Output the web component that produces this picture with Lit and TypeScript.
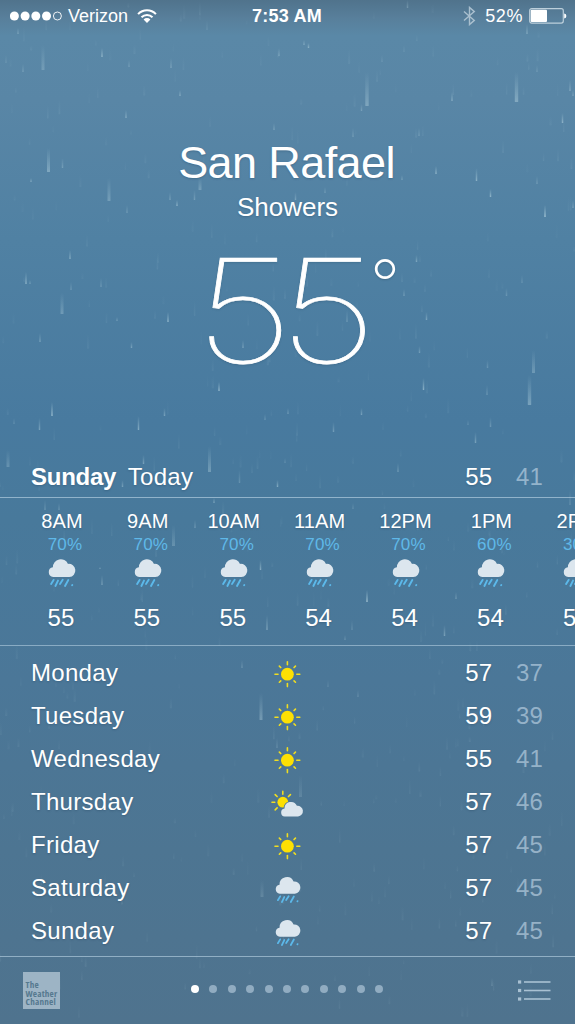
import { LitElement, html, svg, css } from "lit";
import { customElement, property } from "lit/decorators.js";

type Drop = [x: number, top: number, bottom: number, alpha: number, width?: number];

const DROPS: Drop[] = [
  [43, 45, 70, 0.25, 3], [102, 48, 57, 0.5], [18, 28, 34, 0.3], [6, 55, 63, 0.15], [23, 64, 72, 0.25],
  [129, 60, 67, 0.25], [171, 58, 68, 0.3], [180, 90, 96, 0.4], [126, 110, 118, 0.4], [279, 48, 56, 0.3],
  [274, 123, 130, 0.3], [207, 20, 30, 0.12], [304, 40, 45, 0.35], [308.5, 43, 48, 0.5], [367, 72, 106, 0.35, 3.4],
  [361.5, 104, 111, 0.3], [516.5, 72, 102, 0.4, 3.4], [527, 24, 34, 0.35], [407.5, 0, 8, 0.3], [452, 92, 101, 0.4],
  [537, 65, 72, 0.2], [570, 80, 91, 0.35], [562.5, 113, 123, 0.5], [573, 90, 96, 0.3], [382, 55, 62, 0.15],
  [404, 45, 52, 0.12], [48.5, 148, 172, 0.4, 3], [62.5, 158, 168, 0.3], [109, 178, 201, 0.3, 3], [31, 178, 182, 0.4],
  [127, 205, 213, 0.25], [170, 192, 200, 0.3], [177, 200, 206, 0.5], [194.5, 190, 200, 0.3], [200, 178, 190, 0.3, 3],
  [70, 250, 259, 0.45], [26, 272, 284, 0.5], [30, 280, 284, 0.3], [71, 282, 290, 0.25], [101, 278, 287, 0.25],
  [62, 293, 314, 0.3, 3], [168, 312, 322, 0.55], [117, 317, 321, 0.3], [40, 333, 342, 0.35], [131.5, 342, 348, 0.4],
  [243, 340, 348, 0.35], [219, 382, 391, 0.6], [52, 402, 416, 0.6], [138.5, 416, 430, 0.5], [164.5, 408, 416, 0.4],
  [39.5, 418, 430, 0.4], [14, 418, 424, 0.2], [288, 408, 414, 0.3], [265, 414, 420, 0.25], [353, 128, 137, 0.25],
  [419, 128, 136, 0.25], [402, 175, 180, 0.3], [436, 166, 174, 0.5], [476.5, 168, 181, 0.5], [490.5, 189, 197, 0.55],
  [537, 176, 184, 0.25], [545, 205, 217, 0.5, 2], [573, 200, 208, 0.3], [416.5, 255, 262, 0.4], [404, 289, 296, 0.3],
  [426.5, 312, 320, 0.4], [347, 310, 322, 0.25], [419.5, 346, 353, 0.35], [533.5, 350, 373, 0.3, 3],
  [529.5, 375, 405, 0.4, 3.4], [487.5, 360, 368, 0.25], [423.5, 378, 390, 0.55], [487, 385, 395, 0.25],
  [361.5, 408, 415, 0.4], [333.5, 422, 432, 0.35], [490.5, 417, 427, 0.3], [475.5, 432, 443, 0.4], [468, 420, 425, 0.2],
  [522, 275, 283, 0.2], [506.5, 288, 296, 0.25], [295.5, 192, 200, 0.35], [325, 187, 193, 0.25], [8, 450, 467, 0.25, 3],
  [209.5, 446, 472, 0.35, 3], [143.5, 455, 464, 0.4], [122.5, 480, 487, 0.4], [239.5, 470, 483, 0.25],
  [277.5, 480, 487, 0.5], [214, 498, 503, 0.4], [173.5, 525, 546, 0.25, 3], [195, 520, 528, 0.3], [260.5, 560, 570, 0.5],
  [45, 500, 510, 0.25], [59, 503, 510, 0.25], [102, 575, 585, 0.35], [267, 615, 630, 0.4], [100, 567, 569, 0.4],
  [285, 458, 463, 0.2], [398, 463, 472, 0.3], [353, 503, 509, 0.2], [367, 590, 602, 0.5, 2], [456, 592, 599, 0.3],
  [444.5, 625, 636, 0.4], [345, 635, 640, 0.25], [352, 620, 630, 0.2], [570, 490, 505, 0.2], [261, 693, 720, 0.35, 3],
  [300.5, 775, 797, 0.16, 3], [262, 880, 897, 0.18, 3], [242, 660, 668, 0.25], [277, 738, 748, 0.2], [492, 978, 986, 0.2],
  [328, 680, 687, 0.15], [358, 690, 697, 0.2],
];

function mist(count: number): Drop[] {
  let seed = 20417;
  const next = () => (seed = (seed * 16807) % 2147483647) / 2147483647;
  return Array.from({ length: count }, () => {
    const x = next() * 575;
    const y = next() * 1010;
    return [x, y, y + 5 + next() * 11, 0.03 + next() * 0.06, 1.2 + next()] as Drop;
  });
}

const HOURS = [
  { time: "8AM", rain: "70%", temp: 55 },
  { time: "9AM", rain: "70%", temp: 55 },
  { time: "10AM", rain: "70%", temp: 55 },
  { time: "11AM", rain: "70%", temp: 54 },
  { time: "12PM", rain: "70%", temp: 54 },
  { time: "1PM", rain: "60%", temp: 54 },
  { time: "2PM", rain: "30%", temp: 55 },
];

const DAYS = [
  { day: "Monday", icon: "sun", high: 57, low: 37 },
  { day: "Tuesday", icon: "sun", high: 59, low: 39 },
  { day: "Wednesday", icon: "sun", high: 55, low: 41 },
  { day: "Thursday", icon: "partly", high: 57, low: 46 },
  { day: "Friday", icon: "sun", high: 57, low: 45 },
  { day: "Saturday", icon: "rain", high: 57, low: 45 },
  { day: "Sunday", icon: "rain", high: 57, low: 45 },
];

const CLOUD =
  "M5.2 20.1A4.95 4.95 0 0 1 4.9 10.3A7.9 7.9 0 0 1 20 6.9A6.6 6.6 0 1 1 21.4 20.1Z";

@customElement("rain-field")
class RainField extends LitElement {
  static styles = css`
    :host { display: block; }
    svg { display: block; width: 100%; height: 100%; }
  `;
  render() {
    return html`<svg viewBox="0 0 575 1024" aria-hidden="true">
      <defs>
        <linearGradient id="streak" x1="0" y1="0" x2="0" y2="1">
          <stop offset="0" stop-color="#bfe0ea" stop-opacity="0"></stop>
          <stop offset="1" stop-color="#cfe9f0"></stop>
        </linearGradient>
      </defs>
      ${[...mist(420), ...DROPS].map(
        ([x, top, bottom, alpha, width = 1.5]) => svg`<rect x=${x - width / 2} y=${top} width=${width}
          height=${bottom - top} rx="0.6" fill="url(#streak)" opacity=${alpha * 0.9}></rect>`
      )}
    </svg>`;
  }
}

@customElement("weather-icon")
class WeatherIcon extends LitElement {
  @property() name = "sun";
  static styles = css`
    :host { display: block; }
    svg { display: block; width: 100%; height: 100%; overflow: visible; }
    .cloud { fill: #dce6ee; }
    .rain { stroke: #5cb9ea; stroke-width: 1.9; stroke-linecap: round; fill: none; }
    .sun { fill: #fde003; }
    .ray { stroke: #f0dd20; stroke-width: 1.6; stroke-linecap: round; }
  `;
  private rays(cx: number, cy: number, near: number, far: number, angles: number[]) {
    return angles.map((a) => {
      const c = Math.cos((a * Math.PI) / 180);
      const s = Math.sin((a * Math.PI) / 180);
      return svg`<line class="ray" x1=${cx + c * near} y1=${cy + s * near} x2=${cx + c * far} y2=${cy + s * far}></line>`;
    });
  }
  render() {
    if (this.name === "rain") {
      return html`<svg viewBox="0 0 28 31">
        <path class="cloud" d=${CLOUD}></path>
        <path class="rain" d="M5.6 22.9L3.1 27M10 23.6L7.4 29M14.7 22.7L12 26.9M20.3 23L17 29M24.3 28l-.2 .3"></path>
      </svg>`;
    }
    if (this.name === "partly") {
      return html`<svg viewBox="0 0 32 28">
        <defs><mask id="cut" maskUnits="userSpaceOnUse" x="-4" y="-4" width="40" height="36">
          <rect x="-4" y="-4" width="40" height="36" fill="#fff"></rect>
          <path d=${CLOUD} transform="translate(9.5 11.1) scale(.82)" fill="#000" stroke="#000" stroke-width="2"></path>
        </mask></defs>
        <g mask="url(#cut)"><circle class="sun" cx="11.8" cy="13.2" r="5.4"></circle></g>
        ${this.rays(11.8, 13.2, 8, 10.8, [135, 180, 225, 270, 315])}
        <path class="cloud" d=${CLOUD} transform="translate(9.5 11.1) scale(.82)"></path>
      </svg>`;
    }
    return html`<svg viewBox="0 0 28 28">
      <circle class="sun" cx="14.4" cy="14.2" r="6.4"></circle>
      ${this.rays(14.4, 14.2, 9.4, 12.4, [0, 90, 180, 270])}
      ${this.rays(14.4, 14.2, 9.4, 11.4, [45, 135, 225, 315])}
    </svg>`;
  }
}

@customElement("app-root")
class AppRoot extends LitElement {
  static styles = css`
    :host {
      display: block;
      width: 575px;
      height: 1024px;
      position: relative;
      overflow: hidden;
      color: #fff;
      font-family: "Liberation Sans", Arial, sans-serif;
      background: linear-gradient(#50738c 0, #587f9b 18px, #5a88a7 36px, #5986a6 100px, #5081a3 240px,
        #487a9f 420px, #48799b 520px, #4b7798 680px, #4d7592 850px, #4f738e 1024px);
    }
    .rain { position: absolute; inset: 0; }
    .screen {
      position: relative;
      display: flex;
      flex-direction: column;
      height: 100%;
      text-shadow: 0 1px 2px rgba(30, 60, 85, 0.3);
    }
    .status {
      display: grid;
      grid-template-columns: 1fr auto 1fr;
      align-items: center;
      height: 32px;
      padding: 0 8px 0 10px;
      font-size: 18px;
      line-height: 32px;
      text-shadow: none;
    }
    .status svg { display: block; }
    .carrier, .power { display: flex; align-items: center; }
    .power { justify-content: flex-end; }
    .signal { margin-right: 6px; }
    .wifi { margin-left: 9px; }
    .clock { font-weight: 700; font-size: 18px; letter-spacing: 0.2px; margin-right: 3px; }
    .charge { margin: 0 6px 0 9px; letter-spacing: 0.6px; }
    .hero {
      display: flex;
      flex-direction: column;
      align-items: center;
      height: 423px;
    }
    .city { margin-top: 104px; font-size: 45px; line-height: 54px; letter-spacing: -0.6px; margin-right: 2px; }
    .sky { margin-top: 1px; font-size: 26px; line-height: 32px; }
    .temp {
      display: flex;
      align-items: flex-start;
      align-self: stretch;
      margin: 14px 0 0 194.5px;
      font-family: Inter, "Liberation Sans", sans-serif;
      font-weight: 100;
      font-size: 144px;
      line-height: 148px;
    }
    .number {
      width: 175.5px;
      letter-spacing: -12px;
      transform: scaleX(1.213);
      transform-origin: 0 0;
      -webkit-text-stroke: 0.7px #fff;
    }
    .degree { font-size: 66px; line-height: 66px; font-weight: 200; margin-top: 13px; }
    .row {
      display: grid;
      grid-template-columns: 1fr 40px 1fr;
      align-items: center;
      padding: 0 32px 0 31px;
      height: 43px;
      font-size: 24px;
      line-height: 43px;
      letter-spacing: 0.3px;
    }
    .today { height: 42px; line-height: 44px; border-bottom: 1px solid rgba(190, 215, 232, 0.62); }
    .today strong { margin-right: 11.5px; letter-spacing: -0.25px; }
    .range { grid-column: 3; display: flex; justify-content: flex-end; gap: 24px; letter-spacing: 0.1px; }
    .low { color: rgba(200, 220, 236, 0.6); text-shadow: none; }
    .hours {
      display: flex;
      height: 147px;
      padding-left: 19px;
      overflow: hidden;
      border-bottom: 1px solid rgba(190, 215, 232, 0.55);
    }
    .hour {
      flex: 0 0 85.9px;
      display: flex;
      flex-direction: column;
      align-items: center;
    }
    .time { margin-top: 10px; font-size: 20px; line-height: 26px; letter-spacing: 0.1px; }
    .chance { margin-left: 6px; font-size: 17px; line-height: 21px; color: #5fb8e8; text-shadow: none; letter-spacing: 0.2px; }
    .hour weather-icon { width: 28px; height: 31px; margin-top: 2px; }
    .degrees { margin-top: 15px; font-size: 24px; line-height: 30px; margin-right: 2px; }
    .days { padding-top: 5px; height: 305px; border-bottom: 1px solid rgba(190, 215, 232, 0.6); }
    .icon { display: flex; justify-content: center; padding: 3px 0 0 0; }
    .icon .sun { width: 28px; height: 28px; }
    .icon .partly { width: 32px; height: 28px; }
    .icon .rainy { width: 26px; height: 29px; padding-left: 1px; }
    .footer {
      display: grid;
      grid-template-columns: 1fr auto 1fr;
      align-items: center;
      flex: 1;
      padding: 0 24px 0 23px;
    }
    .brand {
      box-sizing: border-box;
      width: 37px;
      height: 37px;
      margin-top: -1px;
      padding: 9.5px 0 0 2.5px;
      background: #9db4c5;
      color: #56798f;
      font: 700 9.2px/8.6px "Open Sans", "Noto Sans", sans-serif;
      font-stretch: 75%;
      letter-spacing: 0.2px;
      text-shadow: none;
      white-space: nowrap;
    }
    .pages { display: flex; gap: 10.4px; margin-top: -4px; }
    .page { width: 8px; height: 8px; border-radius: 50%; background: #91acc1; }
    .page.on { background: #fff; }
    .list { justify-self: end; margin-top: -1px; }
  `;

  render() {
    return html`
      <rain-field class="rain"></rain-field>
      <div class="screen">
        <header class="status">
          <div class="carrier">
            <svg class="signal" width="52" height="12" viewBox="0 0 52 12">
              ${[4.4, 15.1, 25.8, 36.5].map((x) => svg`<circle cx=${x} cy="6" r="4.5" fill="#fff"></circle>`)}
              <circle cx="47.4" cy="6" r="4" fill="none" stroke="#fff" stroke-width=".9"></circle>
            </svg>
            <span>Verizon</span>
            <svg class="wifi" width="20" height="16" viewBox="0 0 20 16">
              <g fill="none" stroke="#fff" stroke-width="2.1">
                <path d="M1.1 6.1A12.2 12.2 0 0 1 18.9 6.1"></path>
                <path d="M4.5 9.3A7.8 7.8 0 0 1 15.5 9.3"></path>
              </g>
              <path d="M10 15L6.6 11.4A4.8 4.8 0 0 1 13.4 11.4Z" fill="#fff"></path>
            </svg>
          </div>
          <span class="clock">7:53 AM</span>
          <div class="power">
            <svg width="13" height="20" viewBox="0 0 13 20">
              <path d="M1 5.5L11.3 14.4L6.5 18.6V1.4L11.3 5.6L1 14.5" fill="none" stroke="#a9bfce" stroke-width="1.4"></path>
            </svg>
            <span class="charge">52%</span>
            <svg width="38" height="16" viewBox="0 0 38 16">
              <rect x=".7" y=".7" width="33.6" height="14.4" rx="2" fill="none" stroke="#bccfdb" stroke-width="1.2"></rect>
              <rect x="1.7" y="1.7" width="16.3" height="12.4" rx="1" fill="#fff"></rect>
              <path d="M35.2 5.4Q37.4 5.8 37.4 8T35.2 10.6Z" fill="#fff"></path>
            </svg>
          </div>
        </header>
        <section class="hero">
          <div class="city">San Rafael</div>
          <div class="sky">Showers</div>
          <div class="temp"><span class="number">55</span><span class="degree">°</span></div>
        </section>
        <div class="row today">
          <div><strong>Sunday</strong>Today</div>
          <div class="range"><span>55</span><span class="low">41</span></div>
        </div>
        <section class="hours">
          ${HOURS.map(
            (h) => html`<div class="hour">
              <span class="time">${h.time}</span>
              <span class="chance">${h.rain}</span>
              <weather-icon name="rain"></weather-icon>
              <span class="degrees">${h.temp}</span>
            </div>`
          )}
        </section>
        <section class="days">
          ${DAYS.map(
            (d) => html`<div class="row">
              <span>${d.day}</span>
              <span class="icon"><weather-icon class=${d.icon === "rain" ? "rainy" : d.icon} name=${d.icon}></weather-icon></span>
              <div class="range"><span>${d.high}</span><span class="low">${d.low}</span></div>
            </div>`
          )}
        </section>
        <footer class="footer">
          <div class="brand">The<br />Weather<br />Channel</div>
          <div class="pages">
            ${Array.from({ length: 11 }, (_, i) => html`<span class="page ${i === 0 ? "on" : ""}"></span>`)}
          </div>
          <svg class="list" width="33" height="21" viewBox="0 0 33 21">
            ${[2, 10.5, 19].map(
              (y) => svg`<rect x="0" y=${y - 1.6} width="3.2" height="3.2" fill="#a9c1d3"></rect>
                <rect x="6" y=${y - 0.8} width="26.5" height="1.6" fill="#a9c1d3"></rect>`
            )}
          </svg>
        </footer>
      </div>
    `;
  }
}
